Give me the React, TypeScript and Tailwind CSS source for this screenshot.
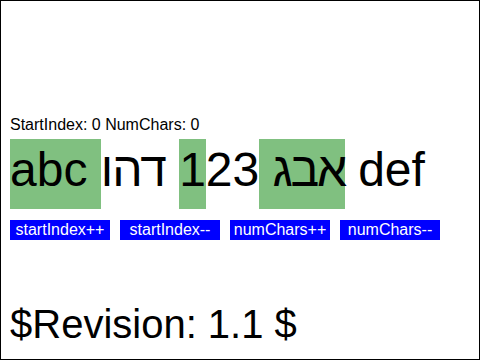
export default function App() {
    return (
        <div
            className="w-[480px] h-[360px] border border-black bg-white pl-[9px] overflow-hidden"
            style={{ fontFamily: '"Liberation Sans", Arial, sans-serif' }}
        >
            <div className="mt-[113px] text-[16px] leading-[21px] text-black whitespace-pre">
                StartIndex: 0 NumChars: 0
            </div>

            {/* selection runs over logical chars 0..8, bidi splits it */}
            <div className="text-[48px] leading-[70px] text-black whitespace-pre">
                <span className="bg-[#80c080] pt-[3.6px] pb-[12.8px]">
                    abc <span className="tracking-[-2.3px]">אבג</span> 1
                </span>
                23 <span className="tracking-[-1px]">דהו</span> def
            </div>

            <div className="mt-[15px] flex gap-[10px]">
                {["startIndex++", "startIndex--", "numChars++", "numChars--"].map((label) => (
                    <div
                        key={label}
                        className="w-[100px] h-[20px] bg-[#0000ff] text-white text-[16px] leading-[20px] text-center whitespace-pre"
                    >
                        {label}
                    </div>
                ))}
            </div>

            <div className="mt-[60px] text-[40px] leading-[48px] text-black whitespace-pre">
                $Revision: 1.1 $
            </div>
        </div>
    );
}
